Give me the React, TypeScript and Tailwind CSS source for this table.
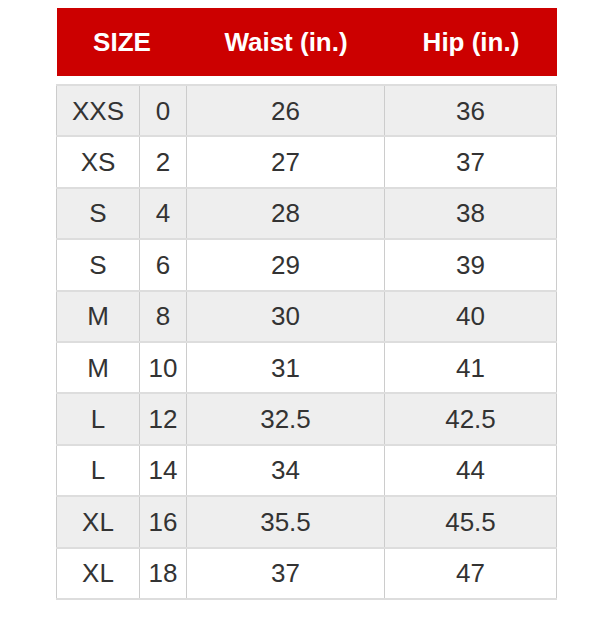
const rows: [string, string, string, string][] = [
  ["XXS", "0", "26", "36"],
  ["XS", "2", "27", "37"],
  ["S", "4", "28", "38"],
  ["S", "6", "29", "39"],
  ["M", "8", "30", "40"],
  ["M", "10", "31", "41"],
  ["L", "12", "32.5", "42.5"],
  ["L", "14", "34", "44"],
  ["XL", "16", "35.5", "45.5"],
  ["XL", "18", "37", "47"],
]

export default function App() {
  return (
    <div className="w-[615px] h-[642px] bg-white font-['Liberation_Sans',Arial,sans-serif] text-[#333]">
      <div className="ml-[57px] w-[500px] pt-[8px]">
        <div className="flex h-[68px] items-center bg-[#cc0000] text-[26px] font-bold text-white">
          <div className="w-[130px] text-center">SIZE</div>
          <div className="w-[198px] text-center">Waist (in.)</div>
          <div className="flex-1 text-center">Hip (in.)</div>
        </div>
        <table className="mt-[8px] w-[501px] -ml-[1px] border-collapse text-[26px] table-fixed">
          <colgroup>
            <col className="w-[83px]" />
            <col className="w-[47px]" />
            <col className="w-[198px]" />
            <col />
          </colgroup>
          <tbody>
            {rows.map((r, i) => (
              <tr key={i} className={`h-[51.4px] ${i % 2 === 0 ? "bg-[#eeeeee]" : "bg-white"}`}>
                {r.map((c, j) => (
                  <td
                    key={j}
                    className="border-x border-y-2 border-x-[#cccccc] border-y-[#dddddd] p-0 text-center align-middle leading-none"
                  >
                    {c}
                  </td>
                ))}
              </tr>
            ))}
          </tbody>
        </table>
      </div>
    </div>
  )
}
